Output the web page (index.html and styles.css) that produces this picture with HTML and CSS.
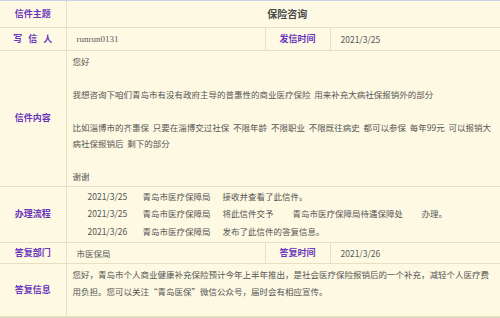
FILE: index.html
```html
<!DOCTYPE html>
<html lang="zh-CN">
<head>
<meta charset="utf-8">
<title>信件详情</title>
<link rel="stylesheet" href="styles.css">
</head>
<body>
<div class="page">
  <div class="topbar"></div>
  <table class="letter">
    <colgroup>
      <col class="c1"><col class="c2"><col class="c3"><col class="c4">
    </colgroup>
    <tr class="r-subject">
      <th>信件主题</th>
      <td colspan="3" class="subject">保险咨询</td>
    </tr>
    <tr class="r-short">
      <th><span class="spaced">写信人</span></th>
      <td class="val latin">runrun0131</td>
      <th>发信时间</th>
      <td class="val">2021/3/25</td>
    </tr>
    <tr class="r-content">
      <th>信件内容</th>
      <td colspan="3" class="text">
        <p>您好</p>
        <p class="gap">我想咨询下咱们青岛市有没有政府主导的普惠性的商业医疗保险&nbsp;&nbsp;用来补充大病社保报销外的部分</p>
        <p class="gap">比如淄博市的齐惠保&nbsp;&nbsp;只要在淄博交过社保&nbsp;&nbsp;不限年龄&nbsp;&nbsp;不限职业&nbsp;&nbsp;不限既往病史&nbsp;&nbsp;都可以参保&nbsp;&nbsp;每年99元&nbsp;&nbsp;可以报销大病社保报销后&nbsp;&nbsp;剩下的部分</p>
        <p class="gap2">谢谢</p>
      </td>
    </tr>
    <tr class="r-flow">
      <th>办理流程</th>
      <td colspan="3" class="flowcell">
        <div class="flow">
          <span>2021/3/25</span><span>青岛市医疗保障局</span><span class="wide">接收并查看了此信件。</span>
          <span>2021/3/25</span><span>青岛市医疗保障局</span><span>将此信件交予</span><span>青岛市医疗保障局待遇保障处</span><span>办理。</span>
          <span>2021/3/26</span><span>青岛市医疗保障局</span><span class="wide">发布了此信件的答复信息。</span>
        </div>
      </td>
    </tr>
    <tr class="r-dept">
      <th>答复部门</th>
      <td class="val">市医保局</td>
      <th>答复时间</th>
      <td class="val">2021/3/26</td>
    </tr>
    <tr class="r-reply">
      <th>答复信息</th>
      <td colspan="3" class="text reply">您好，青岛市个人商业健康补充保险预计今年上半年推出，是社会医疗保险报销后的一个补充，减轻个人医疗费用负担。您可以关注“青岛医保”微信公众号，届时会有相应宣传。</td>
    </tr>
  </table>
  <div class="bottombar"><span class="dot"></span></div>
</div>
</body>
</html>
```

FILE: styles.css
```css
html, body {
  margin: 0;
  padding: 0;
}
body {
  background: #fcf8e0;
  font-family: "Noto Sans CJK SC", "Noto Sans", sans-serif;
  color: #555;
  width: 500px;
  height: 318px;
  overflow: hidden;
}
.page {
  display: flex;
  flex-direction: column;
  height: 318px;
}
.topbar {
  height: 2px;
  background: linear-gradient(to right, #7f9bd6, #b4c8ec 60%, #d9e3f3);
  border-bottom: 1px solid #c9d3e6;
}
.letter {
  width: 500px;
  border-collapse: collapse;
  table-layout: fixed;
  background: #fdf9e2;
}
.c1 { width: 66px; }
.c2 { width: 199px; }
.c3 { width: 65px; }
.c4 { width: 170px; }
.letter th, .letter td {
  border: 1px solid #e9e0c2;
  padding: 0;
  vertical-align: middle;
}
.letter tr:first-child th, .letter tr:first-child td { border-top: none; }
.letter th:first-child { border-left: none; }
.letter td:last-child { border-right: none; }
.letter th {
  color: #6b35bd;
  font-weight: bold;
  font-size: 9px;
  text-align: center;
  line-height: 12px;
}
.spaced {
  letter-spacing: 6px;
  margin-right: -6px;
}
.r-subject { height: 26px; }
.r-short { height: 23px; }
.r-dept { height: 21px; }
.subject {
  text-align: center;
  font-weight: bold;
  font-size: 10px;
  color: #4a4a4a;
  padding-left: 8px !important;
}
.val {
  font-size: 8.5px;
  padding-left: 10px !important;
  color: #5a5a5a;
}
.latin {
  font-family: "Liberation Serif", "Noto Sans CJK SC", serif;
  font-size: 9px;
}
.text {
  font-size: 8.5px;
  line-height: 16.5px;
  padding: 2px 6px 1px 6px !important;
  vertical-align: top !important;
  color: #555;
}
.text p {
  margin: 0;
}
.text .gap { margin-top: 16.5px; }
.text .gap2 { margin-top: 16.5px; }
.r-content td { height: 132px; }
.flowcell {
  padding: 1px 0 2px 21px !important;
}
.flow {
  display: grid;
  grid-template-columns: 55px 80px 70px 129px auto;
  font-size: 8.5px;
  line-height: 17.5px;
  color: #555;
}
.flow .wide { grid-column: 3 / -1; }
.r-reply td { height: 49px; }
.reply {
  padding-top: 2px !important;
}
.bottombar {
  flex: 1;
  background: #e6e4dc;
  border-top: 1px solid #dcd8c8;
  position: relative;
}
.dot {
  position: absolute;
  right: 0;
  top: 1px;
  width: 3px;
  height: 3px;
  background: #222;
}
```
